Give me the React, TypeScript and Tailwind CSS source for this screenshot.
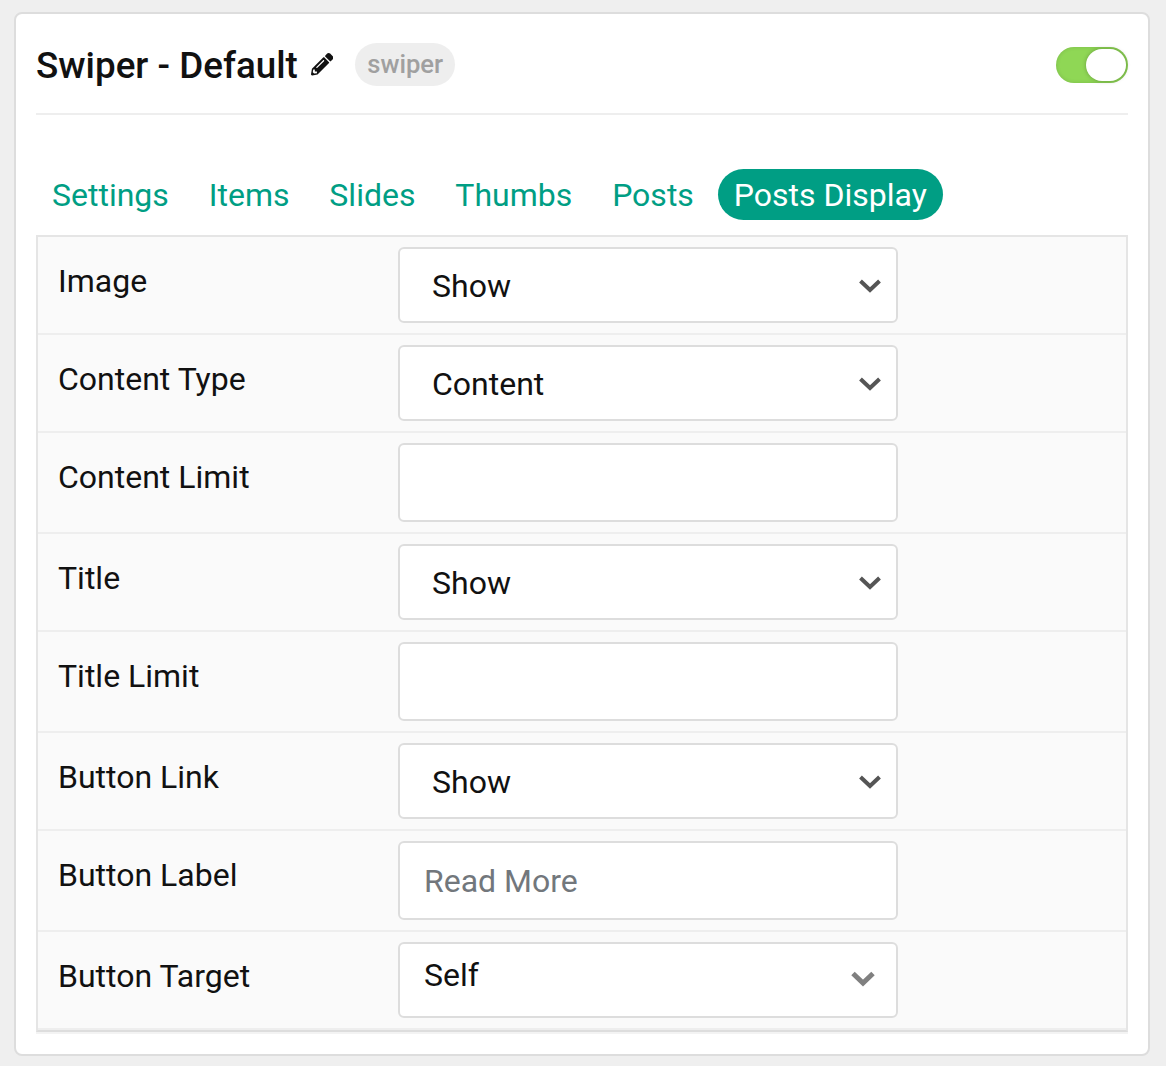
import React from "react";
import { FaPencilAlt } from "react-icons/fa";

type Field = { label: string; kind: "select" | "input" | "compact"; value?: string };

const fields: Field[] = [
  { label: "Image", kind: "select", value: "Show" },
  { label: "Content Type", kind: "select", value: "Content" },
  { label: "Content Limit", kind: "input" },
  { label: "Title", kind: "select", value: "Show" },
  { label: "Title Limit", kind: "input" },
  { label: "Button Link", kind: "select", value: "Show" },
  { label: "Button Label", kind: "input", value: "Read More" },
  { label: "Button Target", kind: "compact", value: "Self" },
];

const tabs = ["Settings", "Items", "Slides", "Thumbs", "Posts", "Posts Display"];

function Control({ field }: { field: Field }) {
  if (field.kind === "input") {
    return (
      <div className="flex h-[79px] w-[500px] items-center rounded-md border-2 border-[#ddd] bg-white pl-6 text-[#72777c]">
        {field.value}
      </div>
    );
  }
  if (field.kind === "compact") {
    return (
      <div className="flex h-[76px] w-[500px] justify-between rounded-md border-2 border-[#ddd] bg-white pl-6 pr-[21px]">
        <span className="mt-[11px] leading-10">{field.value}</span>
        <svg className="mt-[27px] h-4 w-6" viewBox="0 0 24 16" fill="none" stroke="#808080" strokeWidth="5">
          <path d="M2 2.5 12 12 22 2.5" />
        </svg>
      </div>
    );
  }
  return (
    <div className="flex h-[76px] w-[500px] items-center justify-between rounded-md border-2 border-[#ddd] bg-white pl-8 pr-[14px]">
      <span className="pt-0.5">{field.value}</span>
      <svg className="mt-px h-6 w-6" viewBox="0 0 24 24" fill="none" stroke="#555" strokeWidth="4">
        <path d="M2.5 7 12 16 21.5 7" />
      </svg>
    </div>
  );
}

export default function App() {
  return (
    <div className="h-[1066px] w-[1166px] overflow-hidden bg-[#efefef] pl-[14px] pt-3 font-[Roboto,sans-serif] text-[#111]">
      <div className="h-[1044px] w-[1136px] rounded-lg border-2 border-[#ddd] bg-white px-5">
        <header className="flex h-[101px] items-center border-b-2 border-[#eee] pt-0.5">
          <h1 className="pt-0.5 text-[36.8px] font-medium leading-10">Swiper - Default</h1>
          <FaPencilAlt className="ml-[13px] size-[22.4px]" />
          <span className="ml-[22px] flex h-[43px] items-center rounded-full bg-[#eee] px-3 text-[25.6px] font-medium text-[#a0a0a0]">
            swiper
          </span>
          <div className="ml-auto flex h-9 w-[72px] justify-end rounded-full bg-[#8fd755] p-0.5 shadow-[inset_0_0_4px_#0002]">
            <div className="h-8 w-10 rounded-full bg-white shadow-[0_0_4px_#0004]" />
          </div>
        </header>
        <nav className="mt-[54px] flex h-[51px] gap-[7.9px] text-[32px]">
          {tabs.map((t) => (
            <span
              key={t}
              className={
                t === "Posts Display"
                  ? "flex items-center rounded-full bg-[#009e84] px-4 text-white"
                  : "flex items-center px-4 text-[#009e84]"
              }
            >
              {t}
            </span>
          ))}
        </nav>
        <section className="mt-[15px] border-2 border-[#e5e5e5] border-b-[#ddd] bg-[#fafafa] text-[32px] shadow-[0_2px_0_#f3f3f3]">
          {fields.map((f) => (
            <div key={f.label} className="flex border-b-2 border-[#eee] py-2.5">
              <label className="ml-5 mt-3.5 w-[340px] leading-10">{f.label}</label>
              <Control field={f} />
            </div>
          ))}
        </section>
      </div>
    </div>
  );
}
